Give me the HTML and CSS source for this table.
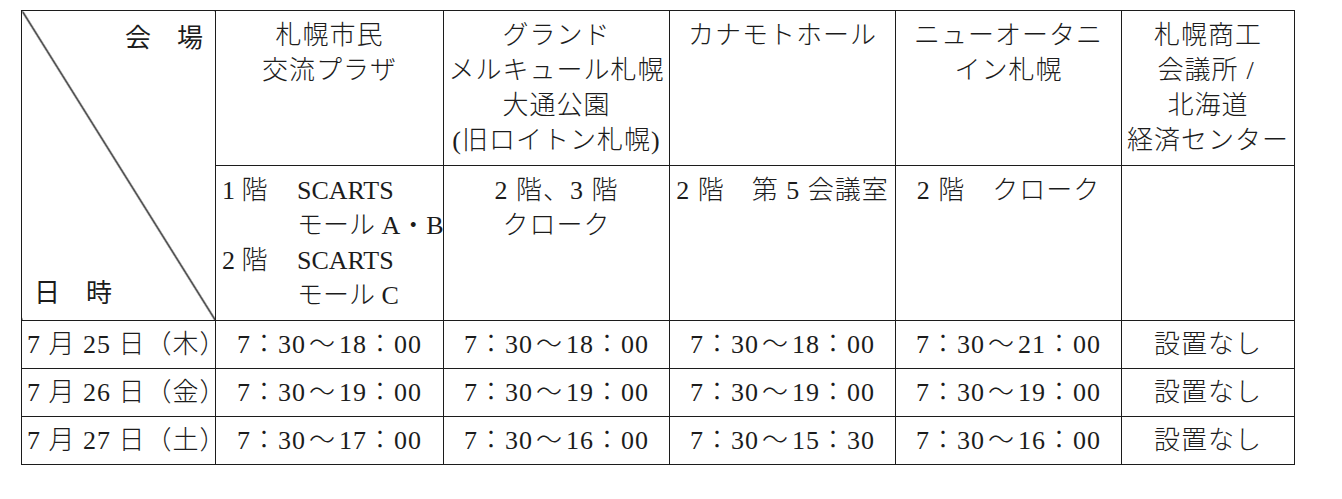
FILE: index.html
```html
<!DOCTYPE html>
<html lang="ja">
<head>
<meta charset="utf-8">
<title>クローク設置場所・時間</title>
<link rel="stylesheet" href="styles.css">
</head>
<body>
<div class="page">
  <table class="schedule">
    <colgroup>
      <col class="c-date">
      <col class="c-v1">
      <col class="c-v2">
      <col class="c-v3">
      <col class="c-v4">
      <col class="c-v5">
    </colgroup>
    <tbody>
      <tr class="row-venue">
        <td class="corner" rowspan="2">
          <div class="corner-inner">
            <span class="corner-top">会　場</span>
            <span class="corner-bottom">日　時</span>
          </div>
        </td>
        <td class="venue">札幌市民<br>交流プラザ</td>
        <td class="venue">グランド<br>メルキュール札幌<br>大通公園<br>(旧ロイトン札幌)</td>
        <td class="venue">カナモトホール</td>
        <td class="venue">ニューオータニ<br>イン札幌</td>
        <td class="venue">札幌商工<br>会議所<span class="slash">/</span><br>北海道<br>経済センター</td>
      </tr>
      <tr class="row-place">
        <td class="place place-left">
          <div class="floors">
            <span>1 階</span><span>SCARTS<br>モール A・B</span>
            <span>2 階</span><span>SCARTS<br>モール C</span>
          </div>
        </td>
        <td class="place">2 階、3 階<br>クローク</td>
        <td class="place">2 階　第 5 会議室</td>
        <td class="place">2 階　クローク</td>
        <td class="place"></td>
      </tr>
      <tr class="row-day">
        <td class="date">7 月 25 日（木）</td>
        <td>7：30<span class="tilde">～</span>18：00</td>
        <td>7：30<span class="tilde">～</span>18：00</td>
        <td>7：30<span class="tilde">～</span>18：00</td>
        <td>7：30<span class="tilde">～</span>21：00</td>
        <td>設置なし</td>
      </tr>
      <tr class="row-day">
        <td class="date">7 月 26 日（金）</td>
        <td>7：30<span class="tilde">～</span>19：00</td>
        <td>7：30<span class="tilde">～</span>19：00</td>
        <td>7：30<span class="tilde">～</span>19：00</td>
        <td>7：30<span class="tilde">～</span>19：00</td>
        <td>設置なし</td>
      </tr>
      <tr class="row-day">
        <td class="date">7 月 27 日（土）</td>
        <td>7：30<span class="tilde">～</span>17：00</td>
        <td>7：30<span class="tilde">～</span>16：00</td>
        <td>7：30<span class="tilde">～</span>15：30</td>
        <td>7：30<span class="tilde">～</span>16：00</td>
        <td>設置なし</td>
      </tr>
    </tbody>
  </table>
</div>
</body>
</html>
```
FILE: styles.css
```css
html, body {
  margin: 0;
  padding: 0;
  background: #ffffff;
}

.page {
  padding: 10px 0 0 21px;
}

.schedule {
  border-collapse: collapse;
  table-layout: fixed;
  width: 1273px;
  color: #1c1c1c;
  font-family: "Liberation Serif", "Noto Sans CJK JP", serif;
  font-weight: 300;
  font-size: 26px;
  line-height: 35px;
  letter-spacing: 1px;
}

.c-date { width: 194px; }
.c-v1 { width: 228px; }
.c-v2 { width: 226px; }
.c-v3 { width: 226px; }
.c-v4 { width: 226px; }
.c-v5 { width: 173px; }

.schedule td {
  border: 1.5px solid #1c1c1c;
  padding: 7px 4px;
  text-align: center;
  vertical-align: top;
  white-space: nowrap;
}

.row-venue { height: 154px; }
.row-place { height: 153px; }
.row-day { height: 48px; }

.corner {
  padding: 7px 12px !important;
  background: linear-gradient(to top right,
    transparent calc(50% - 1px),
    #222222 calc(50% - 0.5px),
    #222222 calc(50% + 0.5px),
    transparent calc(50% + 1px));
}

.corner-inner {
  height: 290px;
  display: flex;
  flex-direction: column;
  justify-content: space-between;
  font-family: "Noto Sans CJK JP", sans-serif;
  font-weight: 400;
  letter-spacing: 0;
}

.corner-top {
  align-self: flex-end;
}

.corner-bottom {
  align-self: flex-start;
}

.slash {
  margin: 0 4px 0 8px;
  font-weight: 300;
}

.place-left {
  text-align: left !important;
  padding-left: 6px !important;
}

.floors {
  display: grid;
  grid-template-columns: 75px auto;
  letter-spacing: 0;
}

.row-day td {
  vertical-align: middle;
  padding: 0 4px;
}

.tilde {
  margin: 0 3px;
}

.schedule .date {
  text-align: left;
  padding-left: 5px;
}
```
